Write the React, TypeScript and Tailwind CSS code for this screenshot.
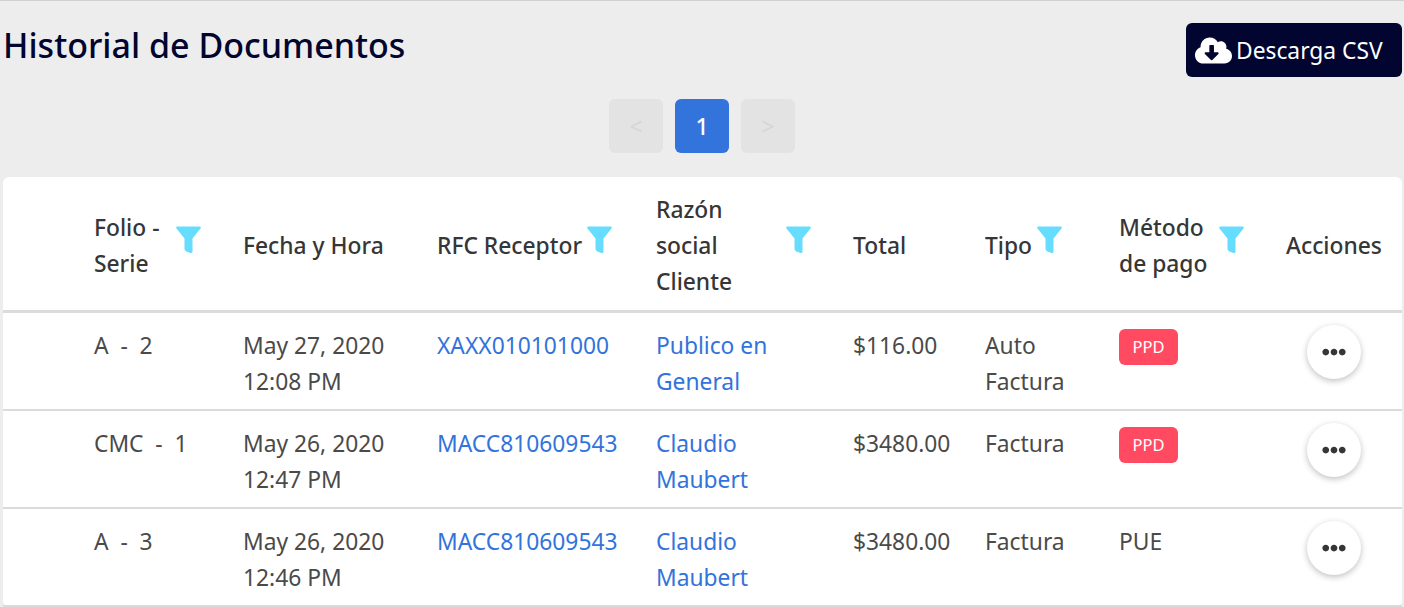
import { FaCloudDownloadAlt, FaEllipsisH } from "react-icons/fa";

const rows = [
  { folio: "A  -  2", fecha: "May 27, 2020", hora: "12:08 PM", rfc: "XAXX010101000", razon: "Publico en General", total: "$116.00", tipo: "Auto Factura", ppd: true },
  { folio: "CMC  -  1", fecha: "May 26, 2020", hora: "12:47 PM", rfc: "MACC810609543", razon: "Claudio Maubert", total: "$3480.00", tipo: "Factura", ppd: true },
  { folio: "A  -  3", fecha: "May 26, 2020", hora: "12:46 PM", rfc: "MACC810609543", razon: "Claudio Maubert", total: "$3480.00", tipo: "Factura", ppd: false },
];

const gridCols = "grid grid-cols-[91px_149px_194px_219px_197px_132px_134px_167px_1fr]";

function Filter({ className = "" }: { className?: string }) {
  return (
    <svg viewBox="0 0 25 28" className={`h-[28px] w-[25px] shrink-0 -mt-[13px] fill-[#66dcff] ${className}`}>
      <path d="M1.5 0.5H23.5Q25.5 0.5 24.5 2.5L16.5 12.5V25.5Q16.5 27.5 14.5 27Q10 25.5 9.2 24.5Q8.5 24 8.5 22.5V12.5L0.5 2.5Q-0.5 0.5 1.5 0.5Z" />
    </svg>
  );
}

export default function App() {
  return (
    <div className="h-[607px] overflow-hidden bg-[#ededed] border-t border-[#d0d0d0] font-['Noto_Sans',sans-serif] text-[#4a4a4a]">
      <div className="flex items-start justify-between pl-[3px] pr-[2px] pt-[21px]">
        <h1 className="text-[34px] leading-[46px] font-medium text-[#01052f]">Historial de Documentos</h1>
        <button className="mt-px flex items-center gap-[4px] h-[54px] w-[216px] pl-[9px] rounded-md bg-[#01052f] text-white text-[22.8px]">
          <FaCloudDownloadAlt className="text-[37px]" />
          <span className="mt-[3px]">Descarga CSV</span>
        </button>
      </div>
      <div className="flex justify-center gap-3 mt-[22px]">
        <div className="flex h-[54px] w-[54px] items-center justify-center rounded-md bg-[#e3e3e3] text-[#d6d6d6] text-[23px]">&lt;</div>
        <div className="flex h-[54px] w-[54px] items-center justify-center rounded-md bg-[#3273dc] pt-px font-medium text-white text-[23px]">1</div>
        <div className="flex h-[54px] w-[54px] items-center justify-center rounded-md bg-[#e3e3e3] text-[#d6d6d6] text-[23px]">&gt;</div>
      </div>
      <div className="mt-6 ml-[3px] mr-[2px] rounded-md bg-white text-[22.8px] leading-9">
        <div className={`${gridCols} h-[136px] border-b-[3px] border-[#dbdbdb] pt-[5px] font-medium text-[#363636]`}>
          <div></div>
          <div className="flex items-center">
            <span className="w-[82px]">Folio - Serie</span>
            <Filter />
          </div>
          <div className="flex items-center">Fecha y Hora</div>
          <div className="flex items-center gap-[5px]">
            RFC Receptor
            <Filter />
          </div>
          <div className="flex items-center">
            <span className="w-[130px]">
              Razón
              <br />
              social
              <br />
              Cliente
            </span>
            <Filter />
          </div>
          <div className="flex items-center">Total</div>
          <div className="flex items-center gap-[5px]">
            Tipo
            <Filter />
          </div>
          <div className="flex items-center">
            <span className="w-[100px]">Método de pago</span>
            <Filter />
          </div>
          <div className="flex items-center">Acciones</div>
        </div>
        {rows.map((row, i) => (
          <div key={i} className={`${gridCols} h-[98px] border-b-2 border-[#dbdbdb] pt-[15px]`}>
            <div></div>
            <div className="whitespace-pre">{row.folio}</div>
            <div>
              {row.fecha}
              <br />
              {row.hora}
            </div>
            <div className="text-[#3273dc]">{row.rfc}</div>
            <div className="w-[130px] text-[#3273dc]">{row.razon}</div>
            <div>{row.total}</div>
            <div className="w-[100px]">{row.tipo}</div>
            <div>
              {row.ppd ? (
                <span className="mt-px flex h-9 w-[59px] items-center justify-center rounded-md bg-[#ff4a62] text-[16.5px] text-white">PPD</span>
              ) : (
                "PUE"
              )}
            </div>
            <div className="pl-[21px] -mt-[3px]">
              <button className="flex h-[54px] w-[54px] items-center justify-center rounded-full bg-white text-[#363636] shadow-[0_2px_6px_rgba(0,0,0,0.25)]">
                <FaEllipsisH className="text-[24px]" />
              </button>
            </div>
          </div>
        ))}
      </div>
    </div>
  );
}
